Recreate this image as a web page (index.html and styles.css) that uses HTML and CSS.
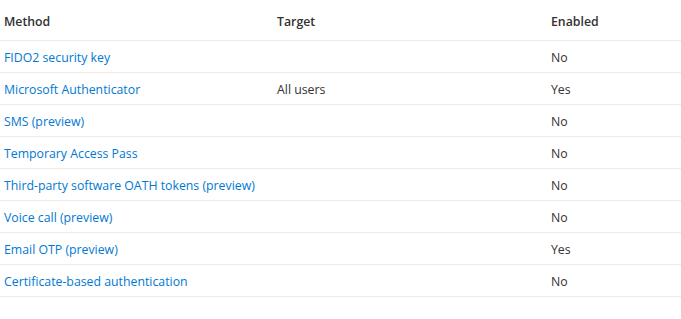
FILE: index.html
```html
<!DOCTYPE html>
<html lang="en">
<head>
<meta charset="utf-8">
<link rel="stylesheet" href="styles.css">
</head>
<body>
<div class="table">
  <div class="row head">
    <div class="cell">Method</div>
    <div class="cell">Target</div>
    <div class="cell">Enabled</div>
  </div>
  <div class="row">
    <a class="cell link">FIDO2 security key</a>
    <div class="cell"></div>
    <div class="cell">No</div>
  </div>
  <div class="row">
    <a class="cell link">Microsoft Authenticator</a>
    <div class="cell">All users</div>
    <div class="cell">Yes</div>
  </div>
  <div class="row">
    <a class="cell link">SMS (preview)</a>
    <div class="cell"></div>
    <div class="cell">No</div>
  </div>
  <div class="row">
    <a class="cell link">Temporary Access Pass</a>
    <div class="cell"></div>
    <div class="cell">No</div>
  </div>
  <div class="row">
    <a class="cell link">Third-party software OATH tokens (preview)</a>
    <div class="cell"></div>
    <div class="cell">No</div>
  </div>
  <div class="row">
    <a class="cell link">Voice call (preview)</a>
    <div class="cell"></div>
    <div class="cell">No</div>
  </div>
  <div class="row">
    <a class="cell link">Email OTP (preview)</a>
    <div class="cell"></div>
    <div class="cell">Yes</div>
  </div>
  <div class="row">
    <a class="cell link">Certificate-based authentication</a>
    <div class="cell"></div>
    <div class="cell">No</div>
  </div>
</div>
</body>
</html>
```
FILE: styles.css
```css
html, body {
  margin: 0;
  padding: 0;
  background: #ffffff;
}
body {
  font-family: "Open Sans", "Noto Sans", "Liberation Sans", sans-serif;
  font-size: 12.3px;
  color: #323130;
}
.table {
  display: flex;
  flex-direction: column;
}
.row {
  box-sizing: border-box;
  display: grid;
  grid-template-columns: 273px 274px 1fr;
  padding-left: 4px;
  padding-top: 2px;
  height: 32px;
  align-items: center;
  border-bottom: 1px solid #edebe9;
}
.row.head {
  height: 41px;
  align-items: start;
  padding-top: 0;
}
.head .cell {
  font-weight: 600;
  line-height: 20px;
  padding-top: 12px;
}
.cell {
  line-height: 20px;
  white-space: nowrap;
}
.link {
  color: #0078d4;
  text-decoration: none;
  cursor: pointer;
}
```
